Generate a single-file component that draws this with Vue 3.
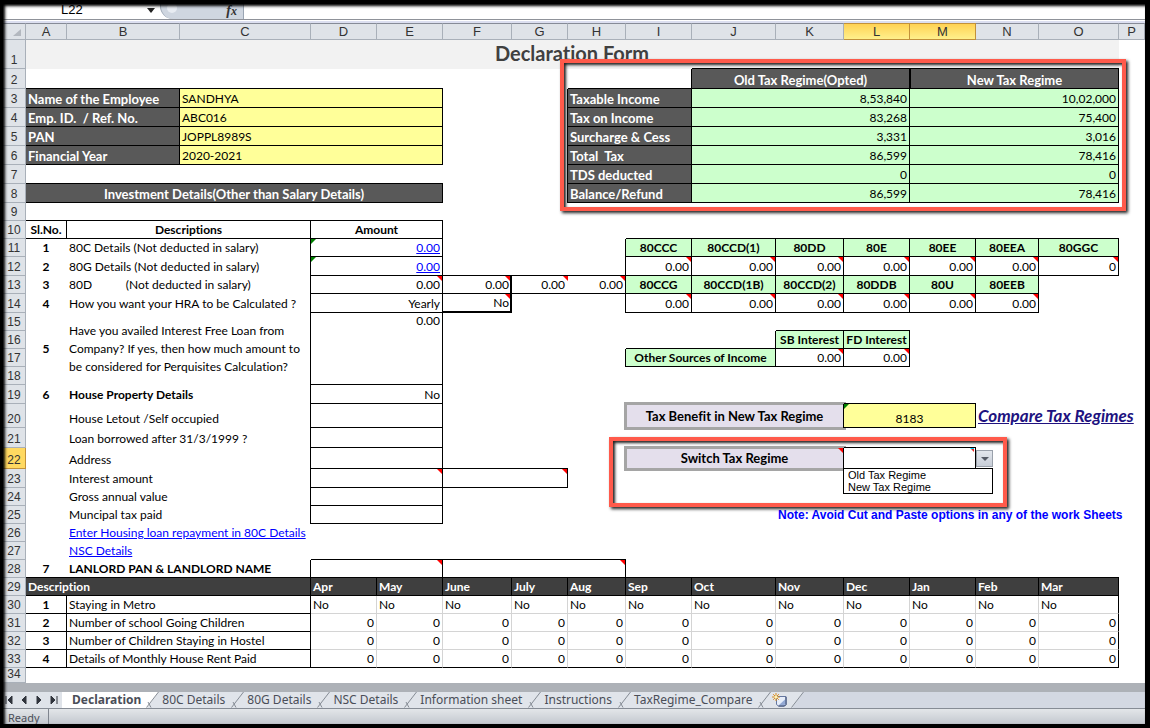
<script setup>
import { ref } from 'vue'

const columns = [
  ['A', 41], ['B', 113], ['C', 131], ['D', 66], ['E', 66], ['F', 69], ['G', 56], ['H', 58],
  ['I', 66], ['J', 84], ['K', 68], ['L', 66], ['M', 66], ['N', 63], ['O', 80], ['P', null],
]
const letters = columns.map((c) => c[0])
const heights = [
  29, 20, 19, 19, 19, 19, 19, 19, 18, 18, 18, 19, 18, 19, 18, 18, 18, 18, 19, 24, 20, 21, 19,
  18, 18, 18, 18, 18, 18, 18, 18, 18, 18, 15,
]

const cells = {}
const covered = new Set()
const rightEdge = {}
const bottomEdge = {}

function parse(range) {
  const [a, b = a] = range.split(':')
  const at = (s) => [letters.indexOf(s[0]), Number(s.slice(1))]
  const [c1, r1] = at(a)
  const [c2, r2] = at(b)
  return { c1, r1, c2, r2 }
}

function outline(range, tone = 'k') {
  const { c1, r1, c2, r2 } = parse(range)
  for (let r = r1; r <= r2; r++) {
    rightEdge[`${c2},${r}`] = tone
    if (c1 > 0) rightEdge[`${c1 - 1},${r}`] ||= tone
  }
  for (let c = c1; c <= c2; c++) {
    bottomEdge[`${c},${r2}`] = tone
    bottomEdge[`${c},${r1 - 1}`] ||= tone
  }
}

function put(range, text, cls = '', extra = {}) {
  const { c1, r1, c2, r2 } = parse(range)
  for (let r = r1; r <= r2; r++) {
    for (let c = c1; c <= c2; c++) if (r !== r1 || c !== c1) covered.add(`${c},${r}`)
  }
  cells[`${c1},${r1}`] = { text, cls, colspan: c2 - c1 + 1, rowspan: r2 - r1 + 1, c2, r2, ...extra }
}

function box(range, text, cls, extra) {
  put(range, text, cls, extra)
  outline(range)
}

put('A1:O1', 'Declaration Form', 'title')

const employee = [
  ['Name of the Employee', 'SANDHYA'],
  ['Emp. ID.  / Ref. No.', 'ABC016'],
  ['PAN', 'JOPPL8989S'],
  ['Financial Year', '2020-2021'],
]
employee.forEach(([label, value], i) => {
  box(`A${i + 3}:B${i + 3}`, label, 'dark')
  box(`C${i + 3}:E${i + 3}`, value, 'yellow')
})
box('A8:E8', 'Investment Details(Other than Salary Details)', 'dark center')

box('J2:L2', 'Old Tax Regime(Opted)', 'dark center top-line')
box('M2:O2', 'New Tax Regime', 'dark center top-line wide-left')
const regimes = [
  ['Taxable Income', '8,53,840', '10,02,000'],
  ['Tax on Income', '83,268', '75,400'],
  ['Surcharge & Cess', '3,331', '3,016'],
  ['Total  Tax', '86,599', '78,416'],
  ['TDS deducted', '0', '0'],
  ['Balance/Refund', '86,599', '78,416'],
]
regimes.forEach(([label, oldTax, newTax], i) => {
  box(`H${i + 3}:I${i + 3}`, label, 'dark')
  box(`J${i + 3}:L${i + 3}`, oldTax, 'green right')
  box(`M${i + 3}:O${i + 3}`, newTax, 'green right')
})

box('A10', 'Sl.No.', 'bold center')
box('B10:C10', 'Descriptions', 'bold center')
box('D10:E10', 'Amount', 'bold center')
outline('D11:E25')

const details = [
  [11, '1', '80C Details (Not deducted in salary)'],
  [12, '2', '80G Details (Not deducted in salary)'],
  [13, '3', '80D           (Not deducted in salary)'],
  [14, '4', 'How you want your HRA to be Calculated ?'],
  [20, '', 'House Letout /Self occupied'],
  [21, '', 'Loan borrowed after 31/3/1999 ?'],
  [22, '', 'Address'],
  [23, '', 'Interest amount'],
  [24, '', 'Gross annual value'],
  [25, '', 'Muncipal tax paid'],
]
details.forEach(([row, no, text]) => {
  put(`A${row}`, no, 'bold center')
  put(`B${row}:C${row}`, text)
})
put('A15:A18', '5', 'bold center middle')
put(
  'B15:C18',
  'Have you availed Interest Free Loan from\nCompany? If yes, then how much amount to\nbe considered for Perquisites Calculation?',
  'middle tall',
)
put('A19', '6', 'bold center')
put('B19:C19', 'House Property Details', 'bold')
put('B26:C26', 'Enter Housing loan repayment in 80C Details', '', { link: true })
put('B27:C27', 'NSC Details', '', { link: true })
put('A28', '7', 'bold center')
put('B28:C28', 'LANLORD PAN & LANDLORD NAME', 'bold')

box('D11:E11', '0.00', 'right', { link: true, mark: 'formula' })
box('D12:E12', '0.00', 'right', { link: true, mark: 'formula' })
box('D13:E13', '0.00', 'right', { mark: 'note' })
box('D14:E14', 'Yearly', 'right')
box('D15:E18', '0.00', 'right top')
box('D19:E19', 'No', 'right')
;[20, 21, 22, 24, 25].forEach((r) => box(`D${r}:E${r}`, ''))
box('D23:E23', '', '', { mark: 'note' })
box('F23:G23', '', '', { mark: 'note' })
box('D28:E28', '', '', { mark: 'note' })
box('F28:H28', '', '', { mark: 'note' })

box('F13', '0.00', 'right heavy heavy-top', { mark: 'note' })
outline('G13:H13')
put('G13', '0.00', 'right', { mark: 'note' })
put('H13', '0.00', 'right', { mark: 'note' })
box('F14', 'No', 'right heavy heavy-bottom', { mark: 'note' })

const sections = [
  [11, ['80CCC', '80CCD(1)', '80DD', '80E', '80EE', '80EEA', '80GGC']],
  [13, ['80CCG', '80CCD(1B)', '80CCD(2)', '80DDB', '80U', '80EEB']],
]
sections.forEach(([row, names]) => {
  names.forEach((name, i) => {
    const col = letters[8 + i]
    box(`${col}${row}`, name, 'green bold center')
    box(`${col}${row + 1}`, name === '80GGC' ? '0' : '0.00', 'right', { mark: 'note' })
  })
})
box('K16', 'SB Interest', 'green bold center')
box('L16', 'FD Interest', 'green bold center')
box('I17:J17', 'Other Sources of Income', 'green bold center')
box('K17', '0.00', 'right', { mark: 'note' })
box('L17', '0.00', 'right', { mark: 'note' })

put('I20:K20', 'Tax Benefit in New Tax Regime', 'lavender bold center middle')
box('L20:M20', '8183', 'yellow center over', { mark: 'formula' })
put('N20:P20', 'Compare Tax Regimes', 'compare', { link: true })
put('I22:K22', 'Switch Tax Regime', 'lavender bold center middle', { mark: 'note' })
box('L22:M22', '', 'over picker', { picker: true })
put('K25:P25', 'Note: Avoid Cut and Paste options in any of the work Sheets', 'warning')

const months = ['Apr', 'May', 'June', 'July', 'Aug', 'Sep', 'Oct', 'Nov', 'Dec', 'Jan', 'Feb', 'Mar']
box('A29:C29', 'Description', 'month')
const monthly = ['Staying in Metro', 'Number of school Going Children', 'Number of Children Staying in Hostel', 'Details of Monthly House Rent Paid']
monthly.forEach((text, i) => {
  box(`A${30 + i}`, String(i + 1), 'bold center')
  box(`B${30 + i}:C${30 + i}`, text)
})
months.forEach((name, i) => {
  const col = letters[3 + i]
  box(`${col}29`, name, 'month')
  for (let r = 30; r <= 33; r++) {
    put(`${col}${r}`, r === 30 ? 'No' : '0', r === 30 ? '' : 'right')
    rightEdge[`${3 + i},${r}`] = col === 'O' ? 'k' : 'g'
    bottomEdge[`${3 + i},${r}`] = r === 33 ? 'k' : 'g'
  }
})

const rows = heights.map((height, i) => {
  const r = i + 1
  const list = []
  letters.forEach((_, c) => {
    if (covered.has(`${c},${r}`)) return
    const cell = cells[`${c},${r}`] || { text: '', cls: '', c2: c, r2: r }
    const right = rightEdge[`${cell.c2},${r}`]
    const bottom = bottomEdge[`${c},${cell.r2}`]
    list.push({ ...cell, key: c, classes: [cell.cls, right && `right-${right}`, bottom && `bottom-${bottom}`] })
  })
  return { r, height, list }
})

const selected = new Set(['L', 'M'])
const nameBox = ref('L22')
const regime = ref('')
const tabs = ['Declaration', '80C Details', '80G Details', 'NSC Details', 'Information sheet', 'Instructions', 'TaxRegime_Compare']
const active = ref('Declaration')
const arrows = [
  ['First sheet', 'M1 1v8M7 1L3 5l4 4z'],
  ['Previous sheet', 'M6 1L2 5l4 4z'],
  ['Next sheet', 'M2 1l4 4-4 4z'],
  ['Last sheet', 'M1 1l4 4-4 4zM7 1v8'],
]
</script>

<template>
  <main class="window">
    <header class="formula-bar">
      <input v-model="nameBox" class="name-box" aria-label="Name box" />
      <button class="name-arrow" aria-label="Named ranges">
        <svg width="8" height="5" viewBox="0 0 8 5"><path d="M0 0h8L4 5z" fill="#222" /></svg>
      </button>
      <div class="fx-area">
        <span class="knob"></span>
        <button class="fx" aria-label="Insert function">f<small>x</small></button>
      </div>
      <input class="formula-text" aria-label="Formula" />
    </header>

    <div class="sheet">
      <table>
        <colgroup>
          <col class="gutter" />
          <col v-for="[name, width] in columns" :key="name" :style="width ? { width: width + 'px' } : null" />
        </colgroup>
        <thead>
          <tr>
            <th class="corner"><svg width="8" height="7" viewBox="0 0 8 7"><path d="M8 0v7H0z" fill="#b3b8bf" /></svg></th>
            <th v-for="name in letters" :key="name" scope="col" :class="{ on: selected.has(name) }">{{ name }}</th>
          </tr>
        </thead>
        <tbody>
          <tr v-for="row in rows" :key="row.r" :style="{ height: row.height + 'px' }">
            <th scope="row" :class="{ on: row.r === 22 }">{{ row.r }}</th>
            <td v-for="cell in row.list" :key="cell.key" :colspan="cell.colspan" :rowspan="cell.rowspan" :class="cell.classes">
              <a v-if="cell.link" href="#">{{ cell.text }}</a>
              <template v-else>{{ cell.text }}</template>
              <i v-if="cell.mark" :class="cell.mark"></i>
              <template v-if="cell.picker">
                <i class="note-cyan"></i>
                <button class="drop" aria-label="Show tax regimes">
                  <svg width="8" height="4" viewBox="0 0 8 4"><path d="M0 0h8L4 4z" fill="#555b66" /></svg>
                </button>
                <select v-model="regime" class="choices" size="2" aria-label="Switch Tax Regime">
                  <option>Old Tax Regime</option>
                  <option>New Tax Regime</option>
                </select>
              </template>
            </td>
          </tr>
        </tbody>
      </table>
      <div class="callout summary"></div>
      <div class="callout switcher"></div>
    </div>

    <nav class="tabs" aria-label="Sheets">
      <div class="arrows">
        <button v-for="[label, d] in arrows" :key="label" :aria-label="label">
          <svg width="8" height="10" viewBox="0 0 8 10"><path :d="d" fill="#30343c" stroke="#30343c" /></svg>
        </button>
      </div>
      <template v-for="tab in tabs" :key="tab">
        <button class="tab" :class="{ current: tab === active }" @click="active = tab">{{ tab }}</button>
        <svg class="slant" width="13" height="16" viewBox="0 0 13 16">
          <path d="M0 0h13L1 16H0z" :fill="tab === active ? '#fff' : '#e0e4ea'" />
          <path d="M13 0v16H1z" fill="#e0e4ea" />
          <path d="M12.500 0L0.500 15.500M2 10l3 5.500" fill="none" stroke="#868c95" />
        </svg>
      </template>
      <button class="new-sheet" aria-label="Insert worksheet">
        <svg width="16" height="14" viewBox="0 0 16 14">
          <path d="M4.500 3.500h9.500v8l-1.500 1.500H6.500l-2-1.500z" fill="#e6edf9" stroke="#6577a0" />
          <path d="M7 12l6.500-6v5l-1.500 1.500z" fill="#93a9d4" />
          <path d="M14 4v7.500L12.500 13H6.500" fill="none" stroke="#34466f" />
          <path d="M4 0v8M0 4h8M1.200 1.200l5.600 5.600M6.800 1.200l-5.600 5.600" stroke="#d98a1d" />
          <circle cx="4" cy="4" r="1.500" fill="#fff3b0" />
        </svg>
      </button>
      <svg class="slant" width="13" height="16" viewBox="0 0 13 16">
        <path d="M0 0h13L1 16H0z" fill="#e0e4ea" />
        <path d="M12.500 0L0.500 15.500" stroke="#868c95" />
      </svg>
    </nav>
    <footer class="status"><span>Ready</span></footer>
  </main>
</template>

<style>
body {
  margin: 0;
}
</style>

<style scoped>
.window {
  position: relative;
  display: flex;
  flex-direction: column;
  box-sizing: border-box;
  min-height: 100vh;
  border: solid #000;
  border-width: 4px 5px 5px 3px;
  background: #fff;
  overflow: hidden;
  font-family: Lato, 'Liberation Sans', sans-serif;
  font-size: 12px;
  font-variant-ligatures: none;
  color: #000;
}
.window::after {
  content: '';
  position: absolute;
  inset: 0;
  box-shadow: inset 2px 2px 3px #000;
  pointer-events: none;
}
button,
input,
select {
  margin: 0;
  padding: 0;
  border: 0;
  border-radius: 0;
  background: none;
  font: inherit;
  color: inherit;
  outline: none;
}
.formula-bar {
  display: flex;
  align-items: flex-end;
  flex: none;
  height: 15px;
  overflow: hidden;
  border-bottom: 1px solid #8f9299;
  font-family: 'Liberation Sans', Arial, sans-serif;
}
.name-box {
  width: 80px;
  height: 20px;
  margin-left: 58px;
  font-size: 13px;
}
.name-arrow {
  display: flex;
  margin: 0 5px 6px 6px;
}
.fx-area {
  display: flex;
  align-items: flex-end;
  justify-content: space-between;
  box-sizing: border-box;
  width: 84px;
  height: 26px;
  padding: 0 6px;
  border: 1px solid #9aa5b3;
  border-bottom: 0;
  border-radius: 13px 0 0 13px;
  background: #cfd6e0;
}
.knob {
  width: 10px;
  height: 10px;
  margin-bottom: 6px;
  border-radius: 50%;
  background: #e8ecf2;
}
.fx {
  font: italic bold 14px/16px 'Liberation Serif', serif;
  color: #333;
}
.fx small {
  font-size: 12px;
}
.formula-text {
  flex: 1;
  min-width: 0;
}
.sheet {
  position: relative;
  flex: none;
  margin-top: 1px;
  border-top: 2px solid #dcdff0;
}
table {
  width: 100%;
  table-layout: fixed;
  border-collapse: separate;
  border-spacing: 0;
}
.gutter {
  width: 23px;
}
th {
  box-sizing: border-box;
  padding: 0;
  border: solid #a9b0b9;
  border-width: 0 1px 1px 0;
  background: #dfe3e8;
  font: 13px/15px 'Liberation Sans', Arial, sans-serif;
  color: #333;
}
thead th {
  height: 17px;
  border-top: 1px solid #868b97;
}
tbody th {
  padding-bottom: 1px;
  font-size: 12px;
  line-height: 13px;
  vertical-align: bottom;
}
.corner {
  text-align: right;
  vertical-align: bottom;
  line-height: 0;
  padding: 0 4px 3px 0;
}
th.on {
  border-color: #c2913a;
  background: #ffd961;
}
thead th.on {
  background: linear-gradient(#ffd254, #fff08c);
}
td {
  position: relative;
  box-sizing: border-box;
  padding: 0 3px 1px 2px;
  line-height: 16px;
  white-space: pre;
  vertical-align: bottom;
  overflow: hidden;
}
tbody tr:last-child td {
  line-height: 12px;
}
.right-k,
.right-g {
  padding-right: 2px;
  border-right: 1px solid #000;
}
.bottom-k,
.bottom-g {
  padding-bottom: 0;
  border-bottom: 1px solid #000;
}
.right-g {
  border-right-color: #d4d4d4;
}
.bottom-g {
  border-bottom-color: #d4d4d4;
}
.center {
  text-align: center;
}
.right {
  text-align: right;
}
.middle {
  vertical-align: middle;
}
.top {
  vertical-align: top;
}
.tall {
  line-height: 18px;
}
.bold,
.dark,
.month {
  font-weight: 700;
}
.dark {
  background: #595959;
  color: #fff;
  font-size: 13px;
}
.month {
  background: #3f3f3f;
  color: #fff;
}
.yellow {
  background: #ff9;
}
.green {
  background: #cfc;
}
.top-line {
  box-shadow: 0 -1px #000;
}
.wide-left {
  border-left: 1px solid #000;
}
.title {
  padding-bottom: 3px;
  background: #f2f2f2;
  color: #404040;
  font-size: 20px;
  font-weight: 700;
  line-height: 24px;
  text-align: center;
  vertical-align: middle;
}
.heavy {
  border-right-width: 2px;
  padding-right: 1px;
}
.heavy-top {
  box-shadow: 0 -1px #000;
}
.heavy-bottom {
  border-bottom-width: 2px;
}
.lavender {
  background: #e4dfec;
  outline: 3px solid #a5a5a5;
  outline-offset: -1px;
  font-size: 13px;
}
.over {
  z-index: 1;
  box-shadow: 0 -1px #000, -1px 0 #000;
}
.picker {
  background: #fff;
  overflow: visible;
}
a {
  color: #00f;
}
.compare {
  overflow: visible;
  font-size: 17px;
  font-style: italic;
  font-weight: 700;
  line-height: 22px;
}
.compare a {
  color: #20127f;
}
.warning {
  font: bold 12px/16px 'Liberation Sans', Arial, sans-serif;
  color: #00f;
}
i {
  position: absolute;
  top: 0;
  width: 5px;
  height: 5px;
}
.note {
  right: 0;
  background: #f00;
  clip-path: polygon(0 0, 100% 0, 100% 100%);
}
.formula {
  left: 0;
  background: #008000;
  clip-path: polygon(0 0, 100% 0, 0 100%);
}
.note-cyan {
  right: 1px;
  width: 4px;
  height: 4px;
  background: linear-gradient(#00d8ff 1px, #e22 1px);
  clip-path: polygon(0 0, 100% 0, 100% 100%);
}
.drop {
  position: absolute;
  top: 2px;
  left: 100%;
  display: flex;
  align-items: center;
  justify-content: center;
  box-sizing: border-box;
  width: 17px;
  height: 17px;
  margin-left: 1px;
  border: 1px solid #9aa1ab;
  background: linear-gradient(#e2e6ec, #c8ced8);
}
.choices {
  position: absolute;
  top: 100%;
  left: -1px;
  box-sizing: border-box;
  width: 150px;
  height: 26px;
  border: 1px solid #000;
  background: #fff;
  overflow: hidden;
  appearance: none;
  font: 11px/12px 'Liberation Sans', Arial, sans-serif;
}
.choices option {
  min-height: 12px;
  padding: 0 4px;
}
.callout {
  position: absolute;
  z-index: 2;
  box-sizing: border-box;
  border: 4px solid #ff5a4b;
  box-shadow: 2px 2px 3px #222, inset 2px 2px 3px #222;
  pointer-events: none;
}
.summary {
  left: 557px;
  top: 36px;
  width: 566px;
  height: 152px;
}
.switcher {
  left: 606px;
  top: 414px;
  width: 398px;
  height: 70px;
}
.tabs {
  display: flex;
  flex: none;
  align-items: stretch;
  height: 16px;
  border-top: 9px solid #adb1b7;
  border-bottom: 1px solid #868c95;
  background: #d3d8e2;
  font-family: 'Noto Sans', sans-serif;
  color: #4a4e58;
}
.arrows {
  display: flex;
  justify-content: space-between;
  align-items: center;
  width: 59px;
  box-sizing: border-box;
  padding: 0 4px 0 2px;
  background: #dfe3e9;
}
.arrows button,
.new-sheet {
  display: flex;
}
.tab {
  padding: 0 6px 0 3px;
  background: #e0e4ea;
  line-height: 16px;
}
.tab.current {
  padding: 0 5px 0 10px;
  background: #fff;
  font-weight: 700;
}
.new-sheet {
  align-items: center;
  padding: 0 3px 0 1px;
  background: #e0e4ea;
}
.slant {
  flex: none;
}
.status {
  flex: 1 0 15px;
  height: 15px;
  overflow: hidden;
  background: linear-gradient(#e3e6e9, #c3c8cf);
  font-family: 'Noto Sans', sans-serif;
  font-size: 11px;
  line-height: 18px;
  color: #4a4e58;
}
.status span {
  display: inline-block;
  width: 40px;
  padding-left: 5px;
  border-right: 1px solid #7f858e;
}
</style>
